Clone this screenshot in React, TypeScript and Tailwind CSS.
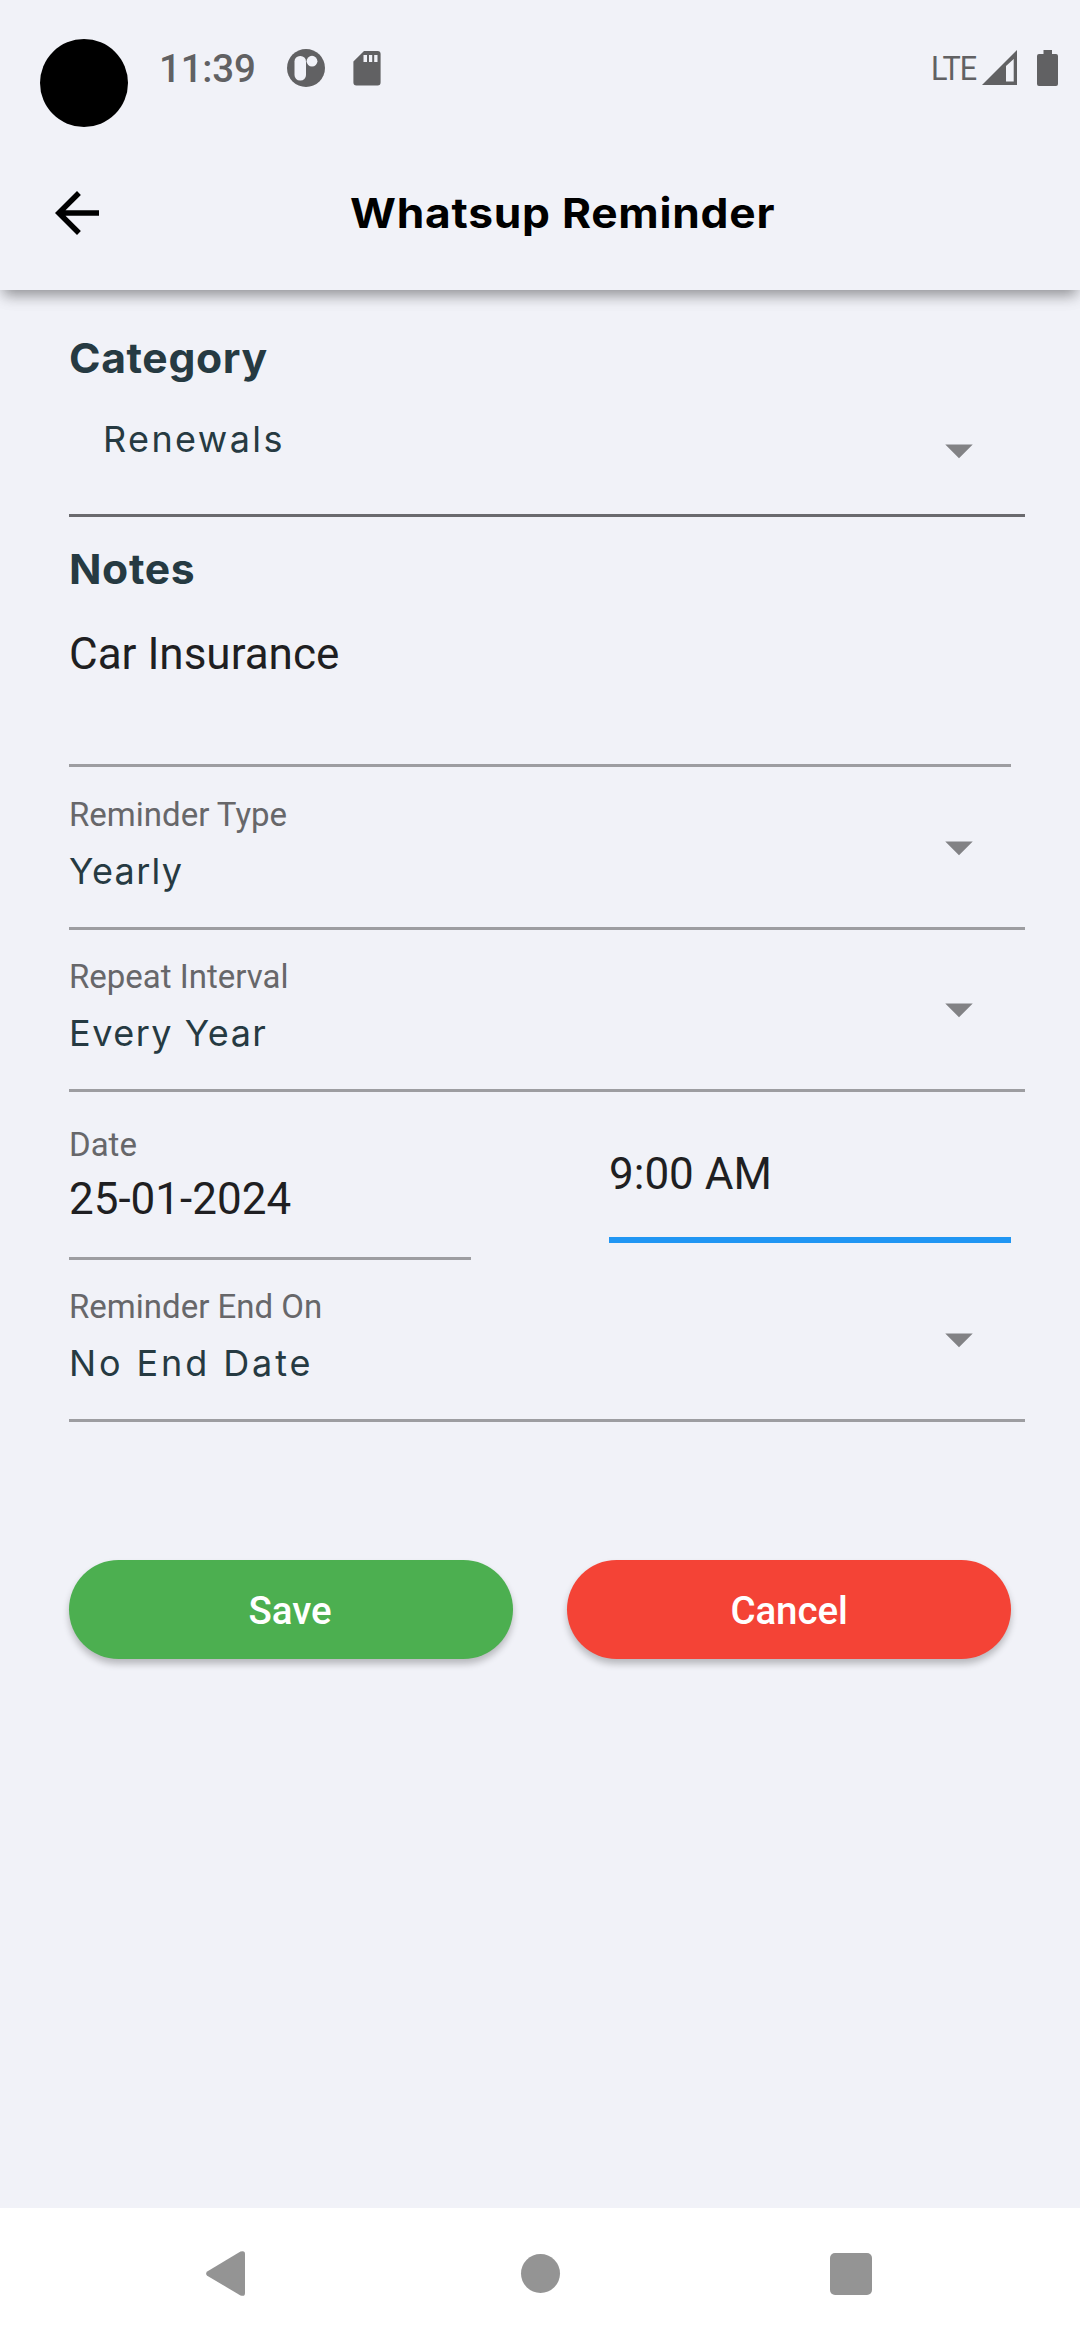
import type { ReactNode } from "react";

function StatusBar() {
  return (
    <div className="flex h-[136px] items-start pl-10 text-[#616163]">
      <div className="mt-[39px] size-[88px] rounded-full bg-black" />
      <span className="ml-[31px] mt-[46px] text-[38.5px] font-medium leading-[46px] tracking-[-0.2px]">
        11:39
      </span>
      <svg className="ml-[31px] mt-[49px] size-[38px]" viewBox="0 0 38 38">
        <circle cx="19" cy="19" r="19" fill="currentColor" />
        <rect x="7.5" y="7" width="11.5" height="24.5" rx="5.5" fill="#f1f2f8" />
        <circle cx="25" cy="12.2" r="5.4" fill="#f1f2f8" />
      </svg>
      <svg className="ml-7 mt-[51px] h-[35px] w-[28px]" viewBox="0 0 28 35">
        <path
          d="M11 0H24.6a3 3 0 0 1 3 3V31.600a3 3 0 0 1-3 3H3.400a3 3 0 0 1-3-3V10.500z"
          fill="currentColor"
        />
        <path d="M10.500 4H14V11H10.500zM16 4H19.200V11H16zM21.200 4H24.500V11H21.200z" fill="#f1f2f8" />
      </svg>
      <div className="ml-auto mr-[22px] flex items-start">
        <span className="mt-[48px] origin-right scale-x-90 text-[34px] font-normal leading-10 tracking-[-1px]">
          LTE
        </span>
        <svg className="ml-[6px] mt-[50px] size-[35px]" viewBox="0 0 35 35">
          <path d="M35 0V35H0zM31.700 9L24 16V31.500H31.700z" fill="currentColor" fillRule="evenodd" />
        </svg>
        <svg className="ml-5 mt-[50px] h-9 w-[21px]" viewBox="0 0 21 36">
          <path
            d="M6.500 0H15V4H19a2 2 0 0 1 2 2V34a2 2 0 0 1-2 2H2a2 2 0 0 1-2-2V6a2 2 0 0 1 2-2H6.500z"
            fill="currentColor"
          />
        </svg>
      </div>
    </div>
  );
}

function Header() {
  return (
    <header className="relative shadow-[0_9px_13px_-4px_rgba(0,0,0,0.34),0_4px_18px_rgba(0,0,0,0.1)]">
      <StatusBar />
      <div className="flex h-[154px] items-center pl-11">
        <svg className="size-[66px]" viewBox="0 0 24 24">
          <path d="M20 11H7.83l5.59-5.59L12 4l-8 8 8 8 1.410-1.410L7.830 13H20v-2z" />
        </svg>
        <h1 className="ml-[240px] origin-left scale-x-108 whitespace-nowrap font-['Inter',sans-serif] text-[41px] font-bold leading-[48px] tracking-[0.7px] text-black">
          Whatsup Reminder
        </h1>
      </div>
    </header>
  );
}

function Heading({ children }: { children: ReactNode }) {
  return (
    <h2 className="origin-left scale-x-104 font-['Inter',sans-serif] text-[41px] font-bold leading-[48px] tracking-[0.6px] text-[#263a42]">
      {children}
    </h2>
  );
}

function DropdownArrow() {
  return (
    <svg className="size-[66px] shrink-0" viewBox="0 0 24 24">
      <path d="M7 10l5 5 5-5z" fill="#828285" />
    </svg>
  );
}

function SelectField({
  label,
  value,
  className,
}: {
  label: string;
  value: string;
  className?: string;
}) {
  return (
    <div
      className={`flex h-[162px] w-[956px] items-start justify-between border-b-[3px] border-[#9d9da1] pr-[33px] pt-[27px] ${className ?? ""}`}
    >
      <div>
        <p className="text-[33px] leading-10 tracking-normal text-[#67676a]">{label}</p>
        <p className="mt-3.5 font-['Inter',sans-serif] text-[36px] font-normal leading-[44px] text-[#263a42]">
          {value}
        </p>
      </div>
      <div className="mt-[19px]">
        <DropdownArrow />
      </div>
    </div>
  );
}

function NavBar() {
  return (
    <nav className="flex h-[132px] items-center bg-white pb-[1px] pl-[206px] text-[#949494]">
      <svg className="h-[45px] w-[39px]" viewBox="0 0 39 45" fill="currentColor">
        <path d="M1.200 20.500L34.500 0.600Q39 -1 39 3V42Q39 46 34.500 44.400L1.200 24.800Q-1 22.600 1.200 20.500z" />
      </svg>
      <div className="ml-[276px] size-[39px] rounded-full bg-[#949494]" />
      <div className="ml-[270px] size-[42px] rounded-[5px] bg-[#949494]" />
    </nav>
  );
}

export default function App() {
  return (
    <div className="flex h-[2340px] w-[1080px] flex-col bg-[#f1f2f8] font-['Roboto',sans-serif]">
      <Header />
      <main className="flex-1 pl-[69px] pt-11">
        <Heading>Category</Heading>
        <div className="flex h-[135px] w-[956px] items-start justify-between border-b-[3px] border-[#6a6a6e] pl-[34px] pr-[33px] pt-[35px]">
          <p className="font-['Inter',sans-serif] text-[36px] font-normal leading-[44px] tracking-[2.4px] text-[#263a42]">
            Renewals
          </p>
          <DropdownArrow />
        </div>

        <div className="mt-7">
          <Heading>Notes</Heading>
        </div>
        <div className="h-[174px] w-[942px] border-b-[3px] border-[#9d9da1] pt-[35px]">
          <p className="text-[44px] leading-[52px] text-[#1f1f22]">Car Insurance</p>
        </div>

        <SelectField className="mt-px tracking-[1.3px]" label="Reminder Type" value="Yearly" />
        <SelectField className="tracking-[1.5px]" label="Repeat Interval" value="Every Year" />

        <div className="flex h-[168px] w-[942px] items-start justify-between">
          <div className="h-[168px] w-[402px] border-b-[3px] border-[#9d9da1] pt-[33px]">
            <p className="text-[33px] leading-10 text-[#67676a]">Date</p>
            <p className="mt-2 text-[44px] leading-[52px] text-[#1f1f22]">25-01-2024</p>
          </div>
          <div className="h-[151px] w-[402px] border-b-[6px] border-[#2196f3] pt-14">
            <p className="text-[44px] leading-[52px] text-[#1f1f22]">9:00 AM</p>
          </div>
        </div>

        <SelectField className="tracking-[2.9px]" label="Reminder End On" value="No End Date" />

        <div className="mt-[138px] flex w-[942px] justify-between text-[38.5px] font-medium tracking-[-0.1px] text-white">
          <button className="h-[99px] w-[444px] rounded-full bg-[#4caf50] pr-0.5 pt-0.5 shadow-[0_5px_7px_rgba(0,0,0,0.24)]">
            Save
          </button>
          <button className="h-[99px] w-[444px] rounded-full bg-[#f44336] pt-0.5 shadow-[0_5px_7px_rgba(0,0,0,0.24)]">
            Cancel
          </button>
        </div>
      </main>
      <NavBar />
    </div>
  );
}
